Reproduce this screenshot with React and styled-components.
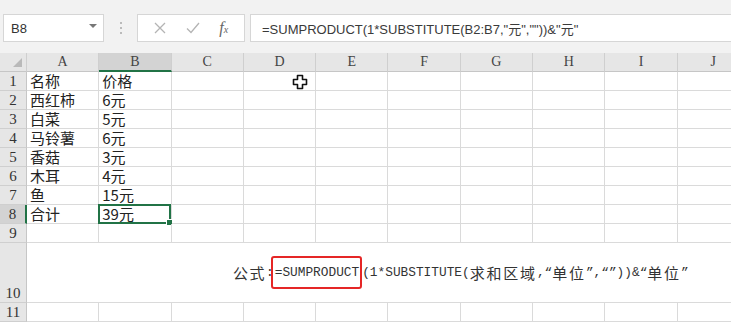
import React from 'react';
import styled, { createGlobalStyle } from 'styled-components';

const GlobalStyle = createGlobalStyle`
  html, body {
    margin: 0;
    padding: 0;
    background: #fff;
    overflow: hidden;
  }
  body {
    font-family: "Liberation Sans", "Noto Sans CJK SC", sans-serif;
  }
`;

const Page = styled.div`
  width: 731px;
  height: 323px;
  overflow: hidden;
  display: flex;
  flex-direction: column;
`;

/* formula toolbar */
const Toolbar = styled.div`
  height: 53px;
  box-sizing: border-box;
  padding: 14px 0 11px 3px;
  background: #f2f2f2;
  display: flex;
  align-items: stretch;
`;

const Box = styled.div`
  background: #fff;
  border: 1px solid #d6d6d6;
  box-sizing: border-box;
  display: flex;
  align-items: center;
`;

const NameBox = styled(Box)`
  width: 101px;
  padding: 0 6px 0 7px;
  justify-content: space-between;
  font-size: 13px;
  color: #333;
`;

const Caret = styled.span`
  width: 0;
  height: 0;
  border-left: 4px solid transparent;
  border-right: 4px solid transparent;
  border-top: 4px solid #777;
  margin-bottom: 4px;
`;

const Dots = styled.div`
  width: 33px;
  display: flex;
  flex-direction: column;
  align-items: center;
  justify-content: center;
  gap: 3px;
  span {
    width: 2px;
    height: 2px;
    background: #bbb;
  }
`;

const ActionBox = styled(Box)`
  width: 108px;
  justify-content: space-around;
  padding: 0 6px;
`;

const Fx = styled.span`
  font-family: "Liberation Serif", serif;
  font-style: italic;
  font-size: 16px;
  color: #666;
  sub {
    font-size: 10px;
    vertical-align: 0;
  }
`;

const FormulaBox = styled(Box)`
  flex: 1;
  margin-left: 5px;
  margin-right: -4px;
  padding-left: 11px;
  font-size: 13px;
  color: #3a3a3a;
`;

/* sheet */
const Sheet = styled.div`
  display: grid;
  grid-template-columns: 27px repeat(10, 72.3px);
  grid-template-rows: repeat(10, 19px) 60px 19px;
`;

const ColHead = styled.div`
  background: ${(p) => (p.$active ? '#d3d3d3' : '#e6e6e6')};
  border-right: 1px solid #cfcfcf;
  border-bottom: ${(p) => (p.$active ? '2px solid #217346' : '1px solid #c6c6c6')};
  box-sizing: border-box;
  display: flex;
  align-items: center;
  justify-content: center;
  font-family: "Liberation Serif", serif;
  font-size: 14px;
  color: #444;
`;

const Corner = styled(ColHead)`
  position: relative;
  &::after {
    content: '';
    position: absolute;
    right: 4px;
    bottom: 4px;
    border-left: 9px solid transparent;
    border-bottom: 9px solid #b9b9b9;
  }
`;

const RowHead = styled.div`
  background: ${(p) => (p.$active ? '#d3d3d3' : '#e6e6e6')};
  border-right: ${(p) => (p.$active ? '2px solid #217346' : '1px solid #c6c6c6')};
  border-bottom: 1px solid #cfcfcf;
  box-sizing: border-box;
  display: flex;
  align-items: flex-end;
  justify-content: center;
  font-family: "Liberation Serif", serif;
  font-size: 15px;
  line-height: 17px;
  color: #333;
`;

const Cell = styled.div`
  position: relative;
  border-right: 1px solid #dadada;
  border-bottom: 1px solid #dadada;
  box-sizing: border-box;
  display: flex;
  align-items: flex-end;
  padding-left: 3px;
  font-family: "Noto Sans CJK SC", sans-serif;
  font-size: 15px;
  line-height: 18px;
  color: #222;
  white-space: nowrap;
`;

const Selection = styled.div`
  position: absolute;
  inset: -1px 0 -1px -1px;
  border: 2px solid #217346;
  pointer-events: none;
  &::after {
    content: '';
    position: absolute;
    right: -4px;
    bottom: -4px;
    width: 5px;
    height: 5px;
    background: #217346;
    border: 1px solid #fff;
  }
`;

const Cursor = styled.svg`
  position: absolute;
  left: 48px;
  top: 2px;
`;

const Merged = styled.div`
  grid-column: span 10;
  border-bottom: 1px solid #dadada;
  display: flex;
  align-items: center;
  padding-left: 206px;
  font-family: "Liberation Mono", "Noto Sans CJK SC", monospace;
  font-size: 12.8px;
  color: #333;
  white-space: nowrap;
`;

const Han = styled.span`
  font-family: "Noto Sans CJK SC", sans-serif;
  font-size: 15px;
  letter-spacing: ${(p) => p.$spacing || '1.8px'};
`;

const Colon = styled.span`
  margin-right: -3px;
`;

const Highlight = styled.span`
  border: 2px solid #e52626;
  border-radius: 3px;
  padding: 7px 1px 7px 2px;
`;

const cols = ['A', 'B', 'C', 'D', 'E', 'F', 'G', 'H', 'I', 'J'];

const rows = [
  ['名称', '价格'],
  ['西红柿', '6元'],
  ['白菜', '5元'],
  ['马铃薯', '6元'],
  ['香菇', '3元'],
  ['木耳', '4元'],
  ['鱼', '15元'],
  ['合计', '39元'],
  ['', ''],
];

const CrossCursor = () => (
  <Cursor width="16" height="16" viewBox="0 0 16 16">
    <path
      d="M5.5 1.5h5v4h4v5h-4v4h-5v-4h-4v-5h4z"
      fill="#fff"
      stroke="#111"
      strokeWidth="1.6"
      strokeLinejoin="round"
    />
  </Cursor>
);

export default function App() {
  return (
    <Page>
      <GlobalStyle />
      <Toolbar>
        <NameBox>
          B8
          <Caret />
        </NameBox>
        <Dots>
          <span />
          <span />
          <span />
        </Dots>
        <ActionBox>
          <svg width="12" height="12" viewBox="0 0 12 12">
            <path d="M1 1l10 10M11 1L1 11" stroke="#b4b4b4" strokeWidth="1.3" />
          </svg>
          <svg width="14" height="12" viewBox="0 0 14 12">
            <path d="M1 6.5l4 4L13 1" stroke="#b4b4b4" strokeWidth="1.3" fill="none" />
          </svg>
          <Fx>
            f<sub>x</sub>
          </Fx>
        </ActionBox>
        <FormulaBox>=SUMPRODUCT(1*SUBSTITUTE(B2:B7,"元",""))&amp;"元"</FormulaBox>
      </Toolbar>

      <Sheet>
        <Corner />
        {cols.map((c) => (
          <ColHead key={c} $active={c === 'B'}>
            {c}
          </ColHead>
        ))}

        {rows.map((r, i) => (
          <React.Fragment key={i}>
            <RowHead $active={i === 7}>{i + 1}</RowHead>
            {cols.map((c, j) => (
              <Cell key={c}>
                {j < 2 ? r[j] : ''}
                {i === 7 && j === 1 && <Selection />}
                {i === 0 && c === 'D' && <CrossCursor />}
              </Cell>
            ))}
          </React.Fragment>
        ))}

        <RowHead>10</RowHead>
        <Merged>
          <Han $spacing="1.5px">公式</Han>
          <Colon>:</Colon>
          <Highlight>=SUMPRODUCT</Highlight>
          (1*SUBSTITUTE(<Han>求和区域</Han>,“<Han>单位</Han>”,“”))&amp;“<Han>单位</Han>”
        </Merged>

        <RowHead>11</RowHead>
        {cols.map((c) => (
          <Cell key={c} />
        ))}
      </Sheet>
    </Page>
  );
}
